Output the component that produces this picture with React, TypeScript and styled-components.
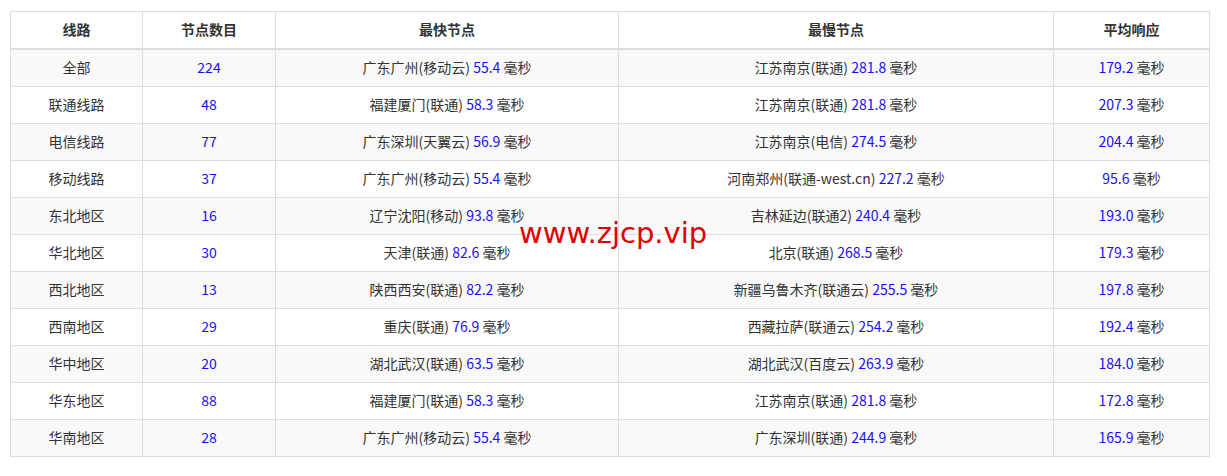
import styled, { createGlobalStyle } from 'styled-components'

const GlobalStyle = createGlobalStyle`
  html, body {
    margin: 0;
    padding: 0;
    background: #fff;
  }
  body {
    font-family: "Microsoft YaHei", "Noto Sans CJK SC", "Noto Sans", sans-serif;
    font-size: 14px;
    color: #333;
  }
`

const Wrap = styled.div`
  position: relative;
  padding: 11px 0 0 10px;
`

const Table = styled.table`
  width: 1199px;
  table-layout: fixed;
  border-collapse: collapse;
  border: 1px solid #ddd;
`

const Th = styled.th`
  height: 34px;
  padding: 0 8px 2px;
  border: 1px solid #ddd;
  border-bottom: 2px solid #ddd;
  font-weight: bold;
  text-align: center;
  line-height: 20px;
`

const Row = styled.tr<{ $striped: boolean }>`
  background: ${(p) => (p.$striped ? '#f9f9f9' : '#fff')};
`

const Td = styled.td`
  height: 34px;
  padding: 0 8px 2px;
  border: 1px solid #ddd;
  text-align: center;
  line-height: 20px;
  white-space: nowrap;
`

const Num = styled.span`
  color: #1a0dff;
`

const Watermark = styled.div`
  position: absolute;
  left: 519px;
  top: 216px;
  color: #e00000;
  font-family: "DejaVu Sans", Verdana, sans-serif;
  font-size: 29px;
  pointer-events: none;
`

type Node = [string, string]
type Line = { name: string; count: string; fast: Node; slow: Node; avg: string }

const rows: Line[] = [
  { name: '全部', count: '224', fast: ['广东广州(移动云)', '55.4'], slow: ['江苏南京(联通)', '281.8'], avg: '179.2' },
  { name: '联通线路', count: '48', fast: ['福建厦门(联通)', '58.3'], slow: ['江苏南京(联通)', '281.8'], avg: '207.3' },
  { name: '电信线路', count: '77', fast: ['广东深圳(天翼云)', '56.9'], slow: ['江苏南京(电信)', '274.5'], avg: '204.4' },
  { name: '移动线路', count: '37', fast: ['广东广州(移动云)', '55.4'], slow: ['河南郑州(联通-west.cn)', '227.2'], avg: '95.6' },
  { name: '东北地区', count: '16', fast: ['辽宁沈阳(移动)', '93.8'], slow: ['吉林延边(联通2)', '240.4'], avg: '193.0' },
  { name: '华北地区', count: '30', fast: ['天津(联通)', '82.6'], slow: ['北京(联通)', '268.5'], avg: '179.3' },
  { name: '西北地区', count: '13', fast: ['陕西西安(联通)', '82.2'], slow: ['新疆乌鲁木齐(联通云)', '255.5'], avg: '197.8' },
  { name: '西南地区', count: '29', fast: ['重庆(联通)', '76.9'], slow: ['西藏拉萨(联通云)', '254.2'], avg: '192.4' },
  { name: '华中地区', count: '20', fast: ['湖北武汉(联通)', '63.5'], slow: ['湖北武汉(百度云)', '263.9'], avg: '184.0' },
  { name: '华东地区', count: '88', fast: ['福建厦门(联通)', '58.3'], slow: ['江苏南京(联通)', '281.8'], avg: '172.8' },
  { name: '华南地区', count: '28', fast: ['广东广州(移动云)', '55.4'], slow: ['广东深圳(联通)', '244.9'], avg: '165.9' },
]

const Ms = ({ v }: { v: string }) => (
  <>
    <Num>{v}</Num> 毫秒
  </>
)

const App = () => (
  <Wrap>
    <GlobalStyle />
    <Table>
      <colgroup>
        <col style={{ width: 132 }} />
        <col style={{ width: 133 }} />
        <col style={{ width: 343 }} />
        <col style={{ width: 435 }} />
        <col style={{ width: 156 }} />
      </colgroup>
      <thead>
        <tr>
          <Th>线路</Th>
          <Th>节点数目</Th>
          <Th>最快节点</Th>
          <Th>最慢节点</Th>
          <Th>平均响应</Th>
        </tr>
      </thead>
      <tbody>
        {rows.map((r, i) => (
          <Row key={r.name} $striped={i % 2 === 0}>
            <Td>{r.name}</Td>
            <Td>
              <Num>{r.count}</Num>
            </Td>
            <Td>
              {r.fast[0]} <Ms v={r.fast[1]} />
            </Td>
            <Td>
              {r.slow[0]} <Ms v={r.slow[1]} />
            </Td>
            <Td>
              <Ms v={r.avg} />
            </Td>
          </Row>
        ))}
      </tbody>
    </Table>
    <Watermark>www.zjcp.vip</Watermark>
  </Wrap>
)

export default App
